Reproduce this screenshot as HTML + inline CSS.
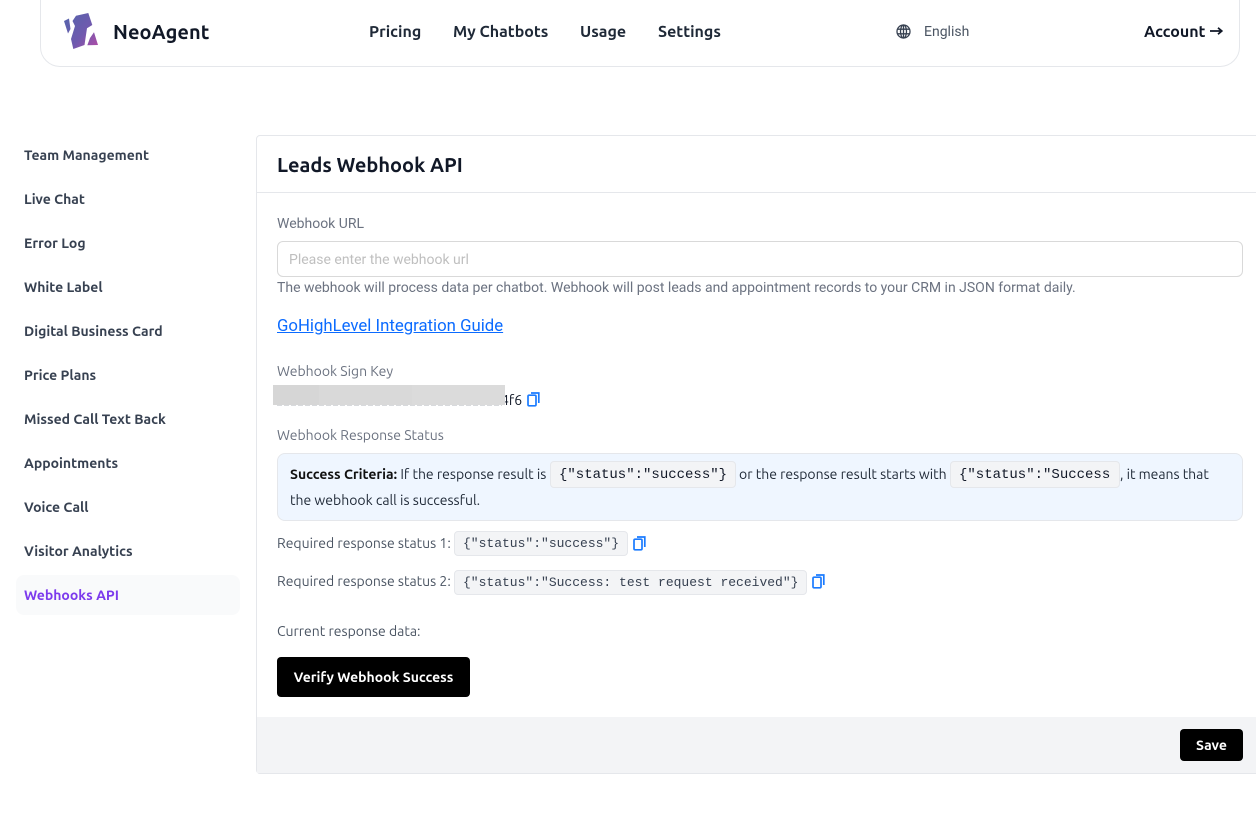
<!DOCTYPE html>
<html><head><meta charset="utf-8"><style>
html,body{margin:0;padding:0;background:#fff;width:1256px;height:813px;overflow:hidden}
body{position:relative;font-family:"Ubuntu","Liberation Sans",sans-serif;color:#111827}
.t{position:absolute;white-space:nowrap;line-height:20px}
.r{font-family:"Roboto","Liberation Sans",sans-serif}
.nav{font-size:16px;font-weight:700;color:#1f2937;top:22px}
.side{position:absolute;left:24px;font-size:14px;font-weight:700;color:#374151;white-space:nowrap;line-height:20px}
.lab{font-size:14px;color:#6b7280}
.code{position:absolute;background:#f3f4f6;border:1px solid #e5e7eb;border-radius:4px;box-sizing:border-box;white-space:nowrap;color:#374151;font-family:"Liberation Mono",monospace}
.code2{font-size:13px;height:25px;line-height:24px;padding-left:8px}
.code1{font-size:14px;height:27px;line-height:26px;padding-left:8px;color:#111827}
svg{position:absolute}
</style></head><body>
<div style="position:absolute;left:40px;top:-20px;width:1200px;height:87px;box-sizing:border-box;border:1px solid #e5e7eb;border-radius:20px;background:#fff"></div>
<svg style="left:63px;top:12px" width="37" height="38" viewBox="0 0 37 38"><defs><linearGradient id="g" gradientUnits="userSpaceOnUse" x1="4" y1="8" x2="34" y2="32"><stop offset="0" stop-color="#5a62ac"/><stop offset=".55" stop-color="#6f5aae"/><stop offset="1" stop-color="#a74ea8"/></linearGradient></defs><path fill="url(#g)" d="M13 3.7L25.3 1L29.3 13L24 16.3L21.5 33L10.3 37L8 27L12 14L9.5 9ZM1 9L6 6.5L7.5 17L5 21.5ZM31 20.3L35 33L24.3 33.3L27 26Z"/></svg>
<div class="t" style="left:113px;top:20px;font-size:20px;line-height:24px;font-weight:700;color:#111827;letter-spacing:.05px">NeoAgent</div>
<div class="t nav" style="left:369px">Pricing</div>
<div class="t nav" style="left:453px">My Chatbots</div>
<div class="t nav" style="left:580px">Usage</div>
<div class="t nav" style="left:658px">Settings</div>
<svg style="left:896px;top:24px" width="15" height="15" viewBox="0 0 15 15" fill="none" stroke="#374151" stroke-width="1.3"><circle cx="7.5" cy="7.5" r="6.5"/><ellipse cx="7.5" cy="7.5" rx="3" ry="6.5"/><path d="M1 5.2H14M1 9.8H14M7.5 1V14"/></svg>
<div class="t r" style="left:924px;top:22px;font-size:14px;color:#4b5563">English</div>
<div class="t nav" style="left:1144px;color:#111827">Account</div>
<svg style="left:1209px;top:25px" width="15" height="12" viewBox="0 0 15 12" fill="none" stroke="#111827" stroke-width="1.7"><path d="M1 6H12.5M9 2.8L12.8 6L9 9.2"/></svg>

<div class="side" style="top:145px">Team Management</div>
<div class="side" style="top:189px">Live Chat</div>
<div class="side" style="top:233px">Error Log</div>
<div class="side" style="top:277px">White Label</div>
<div class="side" style="top:321px">Digital Business Card</div>
<div class="side" style="top:365px">Price Plans</div>
<div class="side" style="top:409px">Missed Call Text Back</div>
<div class="side" style="top:453px">Appointments</div>
<div class="side" style="top:497px">Voice Call</div>
<div class="side" style="top:541px">Visitor Analytics</div>
<div style="position:absolute;left:16px;top:575px;width:224px;height:40px;border-radius:8px;background:#f9fafb"></div>
<div class="side" style="top:585px;color:#7c3aed">Webhooks API</div>

<div style="position:absolute;left:256px;top:135px;width:1010px;height:639px;box-sizing:border-box;border:1px solid #e5e7eb;border-radius:4px 0 0 4px;background:#fff"></div>
<div style="position:absolute;left:257px;top:192px;width:999px;height:1px;background:#e5e7eb"></div>
<div class="t" style="left:277px;top:153px;font-size:20px;line-height:24px;font-weight:700;color:#111827">Leads Webhook API</div>

<div class="t lab r" style="left:277px;top:214px">Webhook URL</div>
<div style="position:absolute;left:277px;top:241px;width:966px;height:36px;box-sizing:border-box;border:1px solid #d9d9d9;border-radius:6px;background:#fff"></div>
<div class="t r" style="left:289px;top:250px;font-size:14px;color:#bfbfbf">Please enter the webhook url</div>
<div class="t lab r" style="left:277px;top:278px">The webhook will process data per chatbot. Webhook will post leads and appointment records to your CRM in JSON format daily.</div>
<div class="t r" style="left:277px;top:316px;font-size:16.75px;line-height:21px;color:#0b6bff;text-decoration:underline">GoHighLevel Integration Guide</div>

<div class="t lab" style="left:277px;top:361px">Webhook Sign Key</div>
<div class="t" style="left:501px;top:390px;font-size:14px;color:#111827">4f6</div>
<div style="position:absolute;left:277px;top:405px;width:225px;height:1px;background:repeating-linear-gradient(90deg,#d8dadd 0 5px,#fff 5px 7px)"></div>
<div style="position:absolute;left:273px;top:385px;width:232px;height:20px;background:linear-gradient(90deg,#d6d6d6 0 46px,#d9d9d9 46px 139px,#dbdbdb 139px)"></div>
<svg style="left:527px;top:392px" width="13" height="15" viewBox="0 0 13 15" fill="none" stroke="#1a7bff" stroke-width="1.7"><path d="M4 1H11.8V11"/><rect x="1" y="3.2" width="8" height="10.6" rx="1.2"/></svg>
<div class="t lab" style="left:277px;top:425px">Webhook Response Status</div>

<div style="position:absolute;left:277px;top:453px;width:966px;height:68px;box-sizing:border-box;background:#eff6ff;border:1px solid #e5e7eb;border-radius:8px"></div>
<div class="t" style="left:290px;top:464px;font-size:14px;color:#1f2937"><b style="color:#111">Success Criteria:</b> If the response result is</div>
<div class="code code1" style="left:550px;top:461px;width:186px">{"status":"success"}</div>
<div class="t" style="left:739px;top:464px;font-size:14px;color:#1f2937">or the response result starts with</div>
<div class="code code1" style="left:950px;top:461px;width:170px">{"status":"Success</div>
<div class="t" style="left:1120px;top:464px;font-size:14px;color:#1f2937;letter-spacing:-.03px">, it means that</div>
<div class="t" style="left:290px;top:490px;font-size:14px;color:#1f2937">the webhook call is successful.</div>

<div class="t" style="left:277px;top:533px;font-size:14px;color:#4b5563">Required response status 1:</div>
<div class="code code2" style="left:454px;top:531px;width:174px">{"status":"success"}</div>
<svg style="left:633px;top:536px" width="13" height="15" viewBox="0 0 13 15" fill="none" stroke="#1a7bff" stroke-width="1.7"><path d="M4 1H11.8V11"/><rect x="1" y="3.2" width="8" height="10.6" rx="1.2"/></svg>
<div class="t" style="left:277px;top:571px;font-size:14px;color:#4b5563">Required response status 2:</div>
<div class="code code2" style="left:454px;top:570px;width:353px">{"status":"Success: test request received"}</div>
<svg style="left:812px;top:574px" width="13" height="15" viewBox="0 0 13 15" fill="none" stroke="#1a7bff" stroke-width="1.7"><path d="M4 1H11.8V11"/><rect x="1" y="3.2" width="8" height="10.6" rx="1.2"/></svg>
<div class="t" style="left:277px;top:621px;font-size:14px;color:#4b5563">Current response data:</div>

<div style="position:absolute;left:277px;top:657px;width:193px;height:40px;background:#000;border-radius:4px;color:#fff;font-size:14px;font-weight:700;line-height:40px;text-align:center;white-space:nowrap">Verify Webhook Success</div>
<div style="position:absolute;left:257px;top:717px;width:999px;height:56px;background:#f3f4f6"></div>
<div style="position:absolute;left:1180px;top:729px;width:63px;height:32px;background:#000;border-radius:4px;color:#fff;font-size:14px;font-weight:700;line-height:32px;text-align:center">Save</div>
</body></html>
